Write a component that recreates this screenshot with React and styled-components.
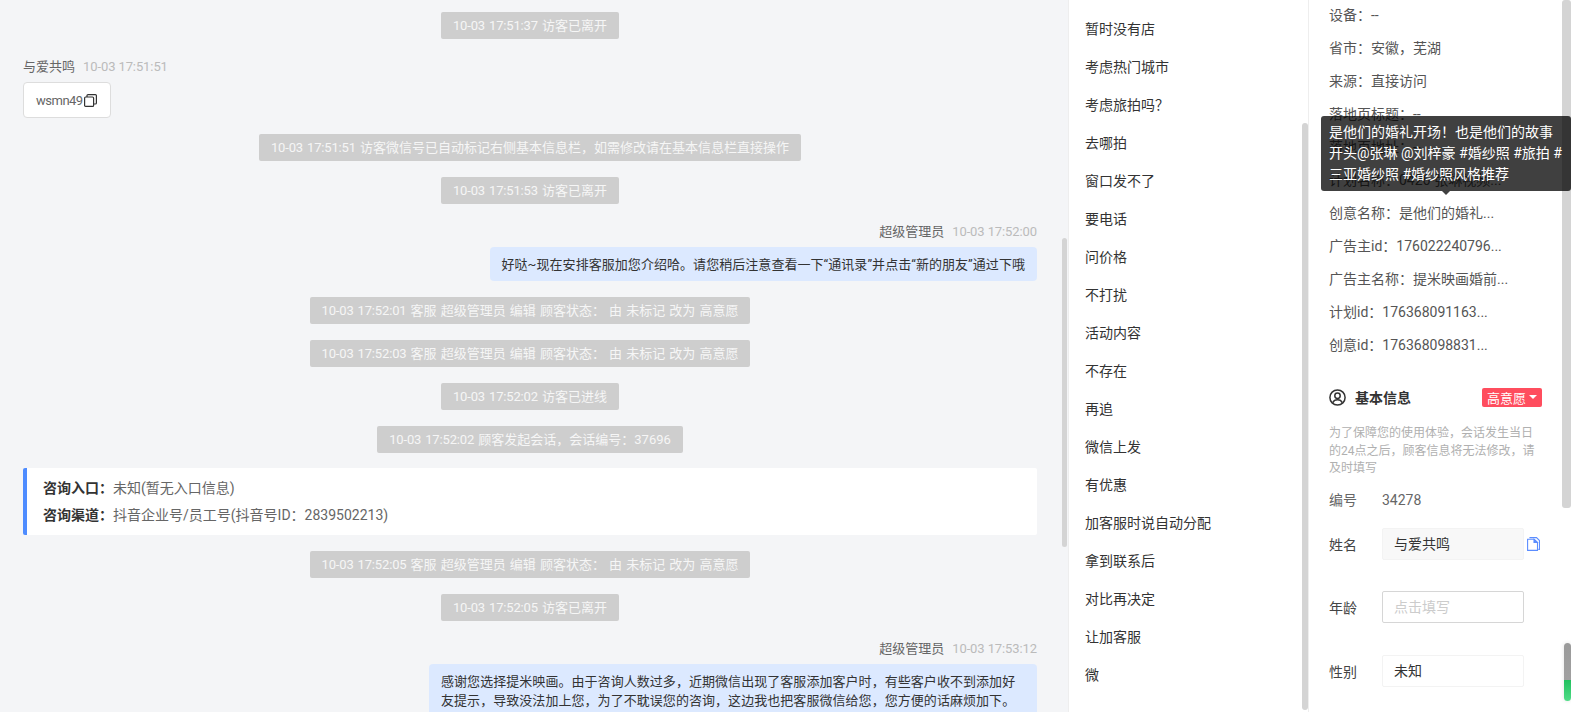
import styled, { createGlobalStyle } from 'styled-components';

const GlobalStyle = createGlobalStyle`
  html, body {
    margin: 0;
    padding: 0;
    height: 712px;
    overflow: hidden;
    background: #fff;
    font-family: Roboto, "Noto Sans CJK SC", sans-serif;
    font-size: 13px;
  }
  * { box-sizing: border-box; }
`;

const Page = styled.div`
  display: flex;
  width: 1571px;
  height: 712px;
  overflow: hidden;
  position: relative;
`;

const ChatPane = styled.main`
  position: relative;
  flex: none;
  width: 1069px;
  height: 712px;
  overflow: hidden;
  padding: 12px 31px 0 23px;
  background: #f4f5f7;
  border-right: 1px solid #eeeeee;
  display: flex;
  flex-direction: column;
  gap: 16px;
`;

const Thumb = styled.div`
  position: absolute;
  top: ${(p) => p.$top}px;
  right: ${(p) => p.$right}px;
  width: ${(p) => p.$width}px;
  height: ${(p) => p.$height}px;
  background: #d4d4d4;
  border-radius: 3px;
`;

const Notice = styled.div`
  align-self: center;
  flex: none;
  height: 27px;
  line-height: 27px;
  padding: 0 12px;
  background: #cecece;
  color: #f6f6f6;
  border-radius: 2px;
  white-space: nowrap;
  word-spacing: 0.9px;
`;

const Stamp = styled.span`
  letter-spacing: -0.15px;
`;

const Message = styled.div`
  flex: none;
  display: flex;
  flex-direction: column;
  align-items: ${(p) => (p.$mine ? 'flex-end' : 'flex-start')};
`;

const MetaRow = styled.div`
  display: flex;
  gap: 8px;
  height: 23px;
  line-height: 23px;
  margin-bottom: 4px;
`;

const Sender = styled.span`
  color: #666;
`;

const Time = styled.span`
  color: #bbb;
  letter-spacing: -0.1px;
`;

const Bubble = styled.div`
  max-width: 608px;
  padding: 7.5px 12px;
  line-height: 19px;
  letter-spacing: 0.05px;
  color: #333;
  background: #dce9ff;
  border-radius: 4px;
`;

const TextCard = styled.div`
  display: flex;
  align-items: center;
  height: 36px;
  padding: 0 13px 0 12px;
  color: #666;
  background: #fff;
  border: 1px solid #dddddd;
  border-radius: 4px;
  letter-spacing: -0.5px;
`;

const SourceCard = styled.div`
  flex: none;
  height: 67px;
  margin-top: -1px;
  padding: 7px 16px;
  font-size: 14px;
  line-height: 27px;
  background: #fff;
  border-left: 4px solid #4e8cff;
  border-radius: 2px;
  color: #666;

  b {
    color: #333;
    font-weight: 700;
  }
`;

const ListPane = styled.nav`
  position: relative;
  flex: none;
  width: 239px;
  height: 712px;
  overflow: hidden;
  padding: 10px 0 0 16px;
  background: #fff;
`;

const ListItem = styled.div`
  height: 38px;
  line-height: 38px;
  font-size: 14px;
  color: #333;
`;

const InfoPane = styled.aside`
  position: relative;
  flex: 1;
  height: 712px;
  overflow: hidden;
  padding: 0 0 0 20px;
  background: #fff;
  border-left: 1px solid #eeeeee;
  font-size: 14px;
`;

const InfoList = styled.div`
  margin-top: -1px;
`;

const InfoRow = styled.div`
  height: 33px;
  line-height: 33px;
  color: #555;
  white-space: nowrap;
`;

const SectionHead = styled.div`
  display: flex;
  align-items: center;
  width: 213px;
  height: 20px;
  margin-top: 25px;
`;

const SectionTitle = styled.h4`
  flex: 1;
  margin: 0 0 0 9px;
  font-size: 14px;
  font-weight: 700;
  color: #333;
`;

const Badge = styled.span`
  display: flex;
  align-items: center;
  gap: 3px;
  height: 19px;
  padding: 0 5px;
  font-size: 13px;
  background: #ff4d5e;
  color: #fff;
  border-radius: 2px;
`;

const Caret = styled.i`
  width: 0;
  height: 0;
  border-left: 4px solid transparent;
  border-right: 4px solid transparent;
  border-top: 4px solid #fff;
`;

const Hint = styled.p`
  width: 212px;
  margin: 18px 0 0;
  font-size: 12px;
  line-height: 17.6px;
  color: #b0b0b0;
`;

const StaticField = styled.div`
  display: flex;
  height: 20px;
  line-height: 20px;
  margin-top: 12px;
  color: #666;
`;

const Field = styled.div`
  display: flex;
  align-items: center;
  height: 32px;
  margin-top: ${(p) => p.$gap}px;
`;

const FieldLabel = styled.span`
  flex: none;
  width: 53px;
  color: ${(p) => p.$color || '#444'};
`;

const Value = styled.span`
  color: #666;
`;

const InputBox = styled.div`
  flex: none;
  width: 142px;
  height: 32px;
  line-height: 30px;
  padding: 0 11px;
  border-radius: 2px;
  color: ${(p) => (p.$placeholder ? '#cccccc' : '#333')};
  background: ${(p) => (p.$readonly ? '#f8f8f8' : '#fff')};
  border: 1px solid ${(p) => (p.$placeholder ? '#d6d6d6' : '#f3f3f3')};
`;

const CopyFile = styled.svg`
  flex: none;
  margin-left: 3px;
`;

const Tooltip = styled.div`
  position: absolute;
  left: 1321px;
  top: 116px;
  width: 250px;
  height: 75px;
  padding: 6px 8px;
  font-size: 14px;
  line-height: 21px;
  color: #fff;
  background: rgba(0, 0, 0, 0.75);
  border-radius: 3px;
  white-space: nowrap;

  &::after {
    content: '';
    position: absolute;
    left: 121px;
    bottom: -4px;
    border-left: 4px solid transparent;
    border-right: 4px solid transparent;
    border-top: 4px solid rgba(0, 0, 0, 0.75);
  }
`;

const ScrollNub = styled.div`
  position: absolute;
  left: 1564px;
  top: 643px;
  width: 7px;
  height: 58px;
  border-radius: 4px;
  background: linear-gradient(#9a9a9a 0, #a0a0a0 63%, #22c05f 64%, #4fdc86 100%);
  box-shadow: 0 0 4px rgba(0, 0, 0, 0.12);
`;

const CopyIcon = () => (
  <svg width="13" height="13" viewBox="0 0 13 13" fill="none" stroke="#333" strokeWidth="1.2" style={{ marginLeft: 1 }}>
    <rect x="0.6" y="3" width="9" height="9.4" rx="1" />
    <path d="M3 3V1.6a1 1 0 0 1 1-1h7.4a1 1 0 0 1 1 1V9a1 1 0 0 1-1 1H9.6" />
  </svg>
);

const UserIcon = () => (
  <svg width="17" height="17" viewBox="0 0 17 17" fill="none" stroke="#333" strokeWidth="1.5">
    <circle cx="8.5" cy="8.5" r="7.6" />
    <circle cx="8.5" cy="6.7" r="2.7" />
    <path d="M3.8 13.6c.8-2 2.6-2.9 4.7-2.9s3.900.9 4.700 2.900" />
  </svg>
);

const editNotice = '客服 超级管理员 编辑 顾客状态： 由 未标记 改为 高意愿';

const notices1 = [
  ['10-03 17:52:01', editNotice],
  ['10-03 17:52:03', editNotice],
  ['10-03 17:52:02', '访客已进线'],
  ['10-03 17:52:02', '顾客发起会话，会话编号：37696'],
];

const tags = [
  '暂时没有店', '考虑热门城市', '考虑旅拍吗？', '去哪拍', '窗口发不了', '要电话',
  '问价格', '不打扰', '活动内容', '不存在', '再追', '微信上发', '有优惠',
  '加客服时说自动分配', '拿到联系后', '对比再决定', '让加客服', '微',
];

const infos = [
  '设备：--', '省市：安徽，芜湖', '来源：直接访问', '落地页标题：--', '落地页地址：--',
  '计划名称：0426-张琳视频...', '创意名称：是他们的婚礼...', '广告主id：176022240796...',
  '广告主名称：提米映画婚前...', '计划id：176368091163...', '创意id：176368098831...',
];

export default function App() {
  return (
    <Page>
      <GlobalStyle />
      <ChatPane>
        <Notice><Stamp>10-03 17:51:37</Stamp> 访客已离开</Notice>
        <Message>
          <MetaRow>
            <Sender>与爱共鸣</Sender>
            <Time>10-03 17:51:51</Time>
          </MetaRow>
          <TextCard>wsmn49<CopyIcon /></TextCard>
        </Message>
        <Notice><Stamp>10-03 17:51:51</Stamp> 访客微信号已自动标记右侧基本信息栏，如需修改请在基本信息栏直接操作</Notice>
        <Notice><Stamp>10-03 17:51:53</Stamp> 访客已离开</Notice>
        <Message $mine>
          <MetaRow>
            <Sender>超级管理员</Sender>
            <Time>10-03 17:52:00</Time>
          </MetaRow>
          <Bubble>好哒~现在安排客服加您介绍哈。请您稍后注意查看一下“通讯录”并点击“新的朋友”通过下哦</Bubble>
        </Message>
        {notices1.map(([time, text]) => (
          <Notice key={time + text}><Stamp>{time}</Stamp> {text}</Notice>
        ))}
        <SourceCard>
          <div><b>咨询入口：</b>未知(暂无入口信息)</div>
          <div><b>咨询渠道：</b>抖音企业号/员工号(抖音号ID：2839502213)</div>
        </SourceCard>
        <Notice><Stamp>10-03 17:52:05</Stamp> {editNotice}</Notice>
        <Notice><Stamp>10-03 17:52:05</Stamp> 访客已离开</Notice>
        <Message $mine>
          <MetaRow>
            <Sender>超级管理员</Sender>
            <Time>10-03 17:53:12</Time>
          </MetaRow>
          <Bubble>感谢您选择提米映画。由于咨询人数过多，近期微信出现了客服添加客户时，有些客户收不到添加好友提示，导致没法加上您，为了不耽误您的咨询，这边我也把客服微信给您，您方便的话麻烦加下。微信号</Bubble>
        </Message>
        <Thumb $top={238} $right={1} $width={5} $height={309} />
      </ChatPane>
      <ListPane>
        {tags.map((t) => (
          <ListItem key={t}>{t}</ListItem>
        ))}
        <Thumb $top={123} $right={0} $width={6} $height={587} />
      </ListPane>
      <InfoPane>
        <InfoList>
          {infos.map((t) => (
            <InfoRow key={t}>{t}</InfoRow>
          ))}
        </InfoList>
        <SectionHead>
          <UserIcon />
          <SectionTitle>基本信息</SectionTitle>
          <Badge>高意愿<Caret /></Badge>
        </SectionHead>
        <Hint>为了保障您的使用体验，会话发生当日的24点之后，顾客信息将无法修改，请及时填写</Hint>
        <StaticField>
          <FieldLabel $color="#666">编号</FieldLabel>
          <Value>34278</Value>
        </StaticField>
        <Field $gap={18}>
          <FieldLabel>姓名</FieldLabel>
          <InputBox $readonly>与爱共鸣</InputBox>
          <CopyFile width="13" height="14" viewBox="0 0 13 14" fill="none" stroke="#5b8dff" strokeWidth="1.1">
            <path d="M3 1.200V.6h6.500L12.500 3.500v8.900h-1.200" />
            <path d="M.6 2.200h6.600l3.300 3.200v8H.6z" fill="#fff" />
            <path d="M7 2.400v3h3.300z" fill="#5b8dff" />
          </CopyFile>
        </Field>
        <Field $gap={31}>
          <FieldLabel>年龄</FieldLabel>
          <InputBox $placeholder>点击填写</InputBox>
        </Field>
        <Field $gap={32}>
          <FieldLabel>性别</FieldLabel>
          <InputBox>未知</InputBox>
        </Field>
        <Thumb $top={0} $right={0} $width={9} $height={508} />
      </InfoPane>
      <Tooltip>
        是他们的婚礼开场！也是他们的故事
        <br />
        开头@张琳 @刘梓豪 #婚纱照 #旅拍 #
        <br />
        三亚婚纱照 #婚纱照风格推荐
      </Tooltip>
      <ScrollNub />
    </Page>
  );
}
